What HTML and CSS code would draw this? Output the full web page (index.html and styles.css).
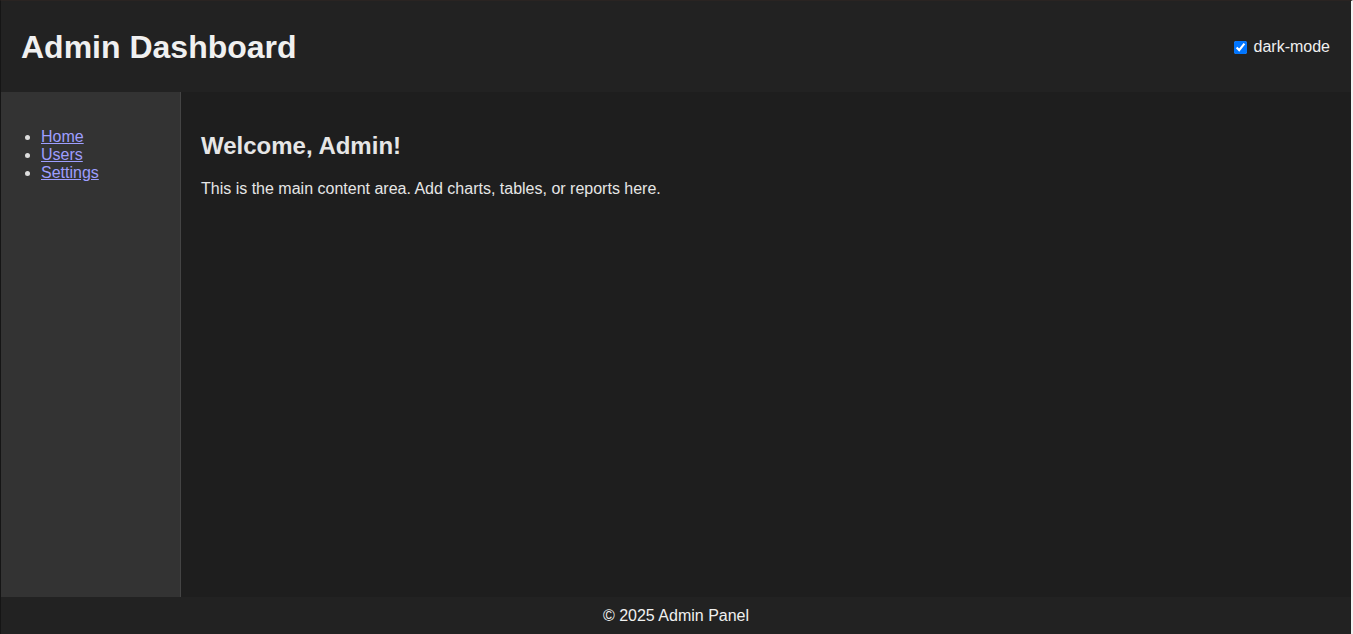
FILE: index.html
```html
<!DOCTYPE html>
<html lang="en">
<head>
<meta charset="utf-8">
<title>Admin Dashboard</title>
<link rel="stylesheet" href="styles.css">
</head>
<body>
<div class="page">
  <header class="header">
    <h1 class="title">Admin Dashboard</h1>
    <label class="toggle"><input type="checkbox" checked> dark-mode</label>
  </header>
  <div class="body-row">
    <aside class="sidebar">
      <ul class="nav">
        <li><a href="#">Home</a></li>
        <li><a href="#">Users</a></li>
        <li><a href="#">Settings</a></li>
      </ul>
    </aside>
    <main class="main">
      <h2 class="welcome">Welcome, Admin!</h2>
      <p class="intro">This is the main content area. Add charts, tables, or reports here.</p>
    </main>
  </div>
  <footer class="footer">© 2025 Admin Panel</footer>
</div>
</body>
</html>
```
FILE: styles.css
```css
html, body {
  margin: 0;
  height: 100%;
}
body {
  font-family: "Liberation Sans", Arial, sans-serif;
  font-size: 16px;
  background: #1e1e1e;
  color: #eee;
}
.page {
  box-sizing: border-box;
  height: 100vh;
  display: flex;
  flex-direction: column;
  border-top: 1px solid #2a2422;
  border-left: 1px solid #151515;
  border-right: 2px solid #f2f2f2;
}
.header {
  height: 91px;
  flex: none;
  display: flex;
  align-items: center;
  justify-content: space-between;
  padding: 1px 21px 0 20px;
  box-sizing: border-box;
  background: #222;
}
.title {
  margin: 0;
  font-size: 32px;
  font-weight: bold;
  color: #f0f0f0;
}
.toggle {
  display: flex;
  align-items: center;
  gap: 6px;
  color: #f0f0f0;
}
.toggle input {
  margin: 0 1px 0 0;
  width: 13px;
  height: 13px;
}
.body-row {
  flex: 1;
  display: flex;
  min-height: 0;
}
.sidebar {
  width: 179px;
  flex: none;
  background: #333;
  border-right: 1px solid #444;
  padding: 20px 0;
  box-sizing: content-box;
}
.nav {
  margin: 16px 0;
  padding-left: 40px;
}
.nav a {
  color: #9e9eff;
}
.nav li::marker {
  color: #ddd;
}
.main {
  flex: 1;
  padding: 20px;
  background: #1e1e1e;
}
.welcome {
  font-size: 24px;
  margin: 20px 0;
  color: #e6e6e6;
}
.intro {
  margin: 0;
  color: #e6e6e6;
}
.footer {
  flex: none;
  height: 37px;
  display: flex;
  align-items: center;
  justify-content: center;
  background: #222;
  color: #f0f0f0;
}
```
